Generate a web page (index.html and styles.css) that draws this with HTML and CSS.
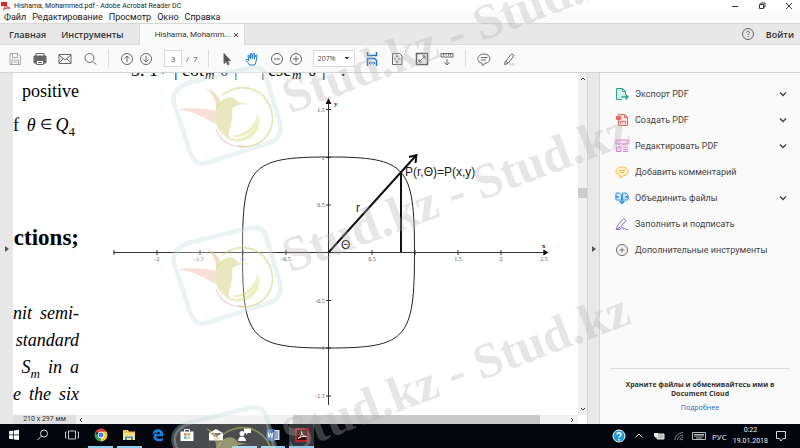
FILE: index.html
```html
<!DOCTYPE html>
<html lang="ru">
<head>
<meta charset="utf-8">
<title>Hishama, Mohammed.pdf - Adobe Acrobat Reader DC</title>
<link rel="stylesheet" href="styles.css">
</head>
<body>
<header class="titlebar">
  <svg class="app-icon" viewBox="0 0 10 10"><path d="M1 0h6l2 2v8H1z" fill="#fff" stroke="#ddd" stroke-width=".5"/><path d="M0 1h6v4H0z" fill="#d8272c"/><path d="M2 9c2-2 2.500-4 2-6 1 3 3 4 5 4-3 0-5 0-7 2z" fill="none" stroke="#d8272c"/></svg>
  <span class="title">Hishama, Mohammed.pdf - Adobe Acrobat Reader DC</span>
  <div class="win-controls">
    <button aria-label="Свернуть"><svg viewBox="0 0 8 8"><path d="M1 4.500h6"/></svg></button>
    <button aria-label="Восстановить"><svg viewBox="0 0 8 8"><path d="M1.500 2.500h4v4h-4zM3 2.500V1h4v4H5.500"/></svg></button>
    <button aria-label="Закрыть"><svg viewBox="0 0 8 8"><path d="M1 1l6 6M7 1L1 7"/></svg></button>
  </div>
</header>
<nav class="menubar">
  <button>Файл</button><button>Редактирование</button><button>Просмотр</button><button>Окно</button><button>Справка</button>
</nav>
<div class="tabs">
  <button class="home">Главная</button>
  <button class="tools-tab">Инструменты</button>
  <div class="doc-tab"><span>Hishama, Mohamm...</span><button aria-label="Закрыть вкладку"><svg viewBox="0 0 6 6"><path d="M1 1l4 4M5 1L1 5"/></svg></button></div>
  <div class="account">
    <button class="icon" aria-label="Справка"><svg viewBox="0 0 14 14"><circle cx="7" cy="7" r="5.500"/><path d="M5.500 5.700c0-2 3-2 3 0 0 1-1.500 1-1.500 2.300M7 9v1"/></svg></button>
    <button class="login">Войти</button>
  </div>
</div>
<div class="toolbar">
  <div class="group wide">
    <button class="icon pale" aria-label="Сохранить"><svg viewBox="0 0 16 16"><path d="M3 2.500h8l2.500 2.500v8.500H3zM5.500 2.500v4h5v-4M5 13.500V9h6.500v4.500M6.500 11h3.500"/></svg></button>
    <button class="icon" aria-label="Печать"><svg viewBox="0 0 16 16"><path d="M4 5V2.500h8V5"/><path d="M2 5h12v7H2z" fill="#666"/><path d="M4.500 9.500h7v4h-7z" fill="#fff"/><path d="M6 11.500h4"/></svg></button>
    <button class="icon" aria-label="Почта"><svg viewBox="0 0 16 16"><path d="M2 3.500h12v9H2zM2 4l6 5 6-5M2 12l4.500-4.500M14 12L9.500 7.500"/></svg></button>
    <button class="icon" aria-label="Найти"><svg viewBox="0 0 16 16"><circle cx="7.500" cy="7" r="4.500"/><path d="M11 10.500l3 3"/></svg></button>
  </div>
  <i class="sep"></i>
  <div class="group">
    <button class="icon" aria-label="Предыдущая страница"><svg viewBox="0 0 16 16"><circle cx="8" cy="8" r="5.500"/><path d="M8 11V5M5.500 7.500L8 5l2.500 2.500"/></svg></button>
    <button class="icon" aria-label="Следующая страница"><svg viewBox="0 0 16 16"><circle cx="8" cy="8" r="5.500"/><path d="M8 5v6M5.500 8.500L8 11l2.500-2.500"/></svg></button>
  </div>
  <div class="pager"><input aria-label="Страница" value="3"><span>/&nbsp; 7</span></div>
  <i class="sep"></i>
  <div class="group wide">
    <button class="icon" aria-label="Выделение"><svg viewBox="0 0 16 16"><path d="M5 2.500v10l2.300-2 1.500 3.300 1.300-.6-1.500-3.200 3-.3z" fill="#555"/></svg></button>
    <button class="icon blue" aria-label="Рука"><svg viewBox="0 0 16 16"><path d="M5.500 14C4.500 12 3 10.500 2 9.500c-.5-1 .7-1.600 1.500-1L5 9.700 4 5c-.2-1 1-1.300 1.400-.4L6.500 8 6.300 3c0-1 1.400-1 1.500 0L8.300 7.500 9 2.800c.2-1 1.500-.8 1.400.2L10.200 8l1.500-3.700c.4-.9 1.500-.4 1.300.5L12.200 9.500c-.2 2-.7 3-1.700 4.500z" fill="#fff"/></svg></button>
    <div class="group">
    <button class="icon" aria-label="Уменьшить"><svg viewBox="0 0 16 16"><circle cx="8" cy="8" r="5.500"/><path d="M5 8h6"/></svg></button>
    <button class="icon" aria-label="Увеличить"><svg viewBox="0 0 16 16"><circle cx="8" cy="8" r="5.500"/><path d="M5 8h6M8 5v6"/></svg></button>
    </div>
  </div>
  <select class="zoom" aria-label="Масштаб"><option>207%</option></select>
  <div class="group wide">
    <button class="icon blue" aria-label="По ширине"><svg viewBox="0 0 16 16"><path d="M3.500 1v3.500h9V1M3.500 15V7.500h7l2 2V15" stroke-width="1.500"/><path d="M5 12h6M6.500 10.500L5 12l1.500 1.500M9.500 10.500L11 12l-1.500 1.500" /></svg></button>
    <button class="icon" aria-label="По странице"><svg viewBox="0 0 16 16"><path d="M3.500 2.500h7l2.500 2.500v8.500H3.500zM8 4.500v2M8 9.500v2M5 8h2M9 8h2.500M7 5.500l1-1 1 1M7 10.500l1 1 1-1"/></svg></button>
    <button class="icon" aria-label="Во весь экран"><svg viewBox="0 0 16 16"><path d="M2.500 2.500h11v11h-11z" stroke-width="1.500"/><path d="M5 11l6-6M8 5h3v3M5 8v3h3" /></svg></button>
    <button class="icon" aria-label="Режим чтения"><svg viewBox="0 0 16 16"><path d="M2 2.500h12v3.500H2zM4.500 3v1.500M7 3v1.500M9.500 3v1.500M11.500 3v1.500M8 8v6M5.500 11.500L8 14l2.500-2.500"/></svg></button>
  </div>
  <i class="sep"></i>
  <div class="group wide">
    <button class="icon" aria-label="Комментарий"><svg viewBox="0 0 16 16"><path d="M6 12.300C-.5 11 1 3 8 3s8.500 8 1 9.500L6.500 14.500zM5 6.500h6.500M5 9h5"/></svg></button>
    <button class="icon" aria-label="Маркер"><svg viewBox="0 0 16 16"><path d="M8 13.500h6" stroke="#ddd" stroke-width="2"/><path d="M4 11l6.500-8 2.500 1.500-6 8-3.500 1zM4.500 10l2.500 2"/></svg></button>
  </div>
</div>
<main class="workspace">
  <button class="rail left" aria-label="Показать панель навигации"><svg viewBox="0 0 4 6"><path d="M0 0l4 3-4 3z"/></svg></button>
  <section class="viewer">
    <div class="page-row">
      <article class="page">
        <div class="text">
          <p class="line">positive</p>
          <p class="line formula"><span class="f">f</span><i>θ</i><span class="in">∈</span><span><i>Q</i><sub>4</sub></span></p>
          <h2 class="line">ctions;</h2>
          <p class="line it"><span>nit</span><span>semi-</span></p>
          <p class="line it">standard</p>
          <p class="line it"><span>S<sub>m</sub></span><span>in</span><span>a</span></p>
          <p class="line it"><span>e</span><span>the</span><span>six</span></p>
        </div>
        <svg class="chart" viewBox="83 73 495 342" preserveAspectRatio="xMinYMin meet">
          <g class="cut"><text x="131" y="76">3. 1+</text><text x="174" y="76">|</text><text x="182" y="76">cot</text><text x="220" y="76">θ</text><text x="234" y="76">|</text><text x="261" y="76">|</text><text x="268" y="76">csc</text><text x="308" y="76">θ</text><text x="322" y="76">|</text><text x="341" y="76">.</text></g>
          <g class="sub"><text x="205" y="79">m</text><text x="292" y="79">m</text></g>
          <g class="axes">
            <path d="M113 252.500h434M328.500 102v303"/>
            <path d="M114 250v5M157 250v5M200 250v5M243 250v5M286 250v5M372 250v5M415 250v5M458 250v5M501 250v5M544 250v5M326 109.500h5M326 157.500h5M326 205h5M326 300.500h5M326 348h5M326 396h5"/>
            <path class="solid" d="M548.500 252.500l-5-3v6zM328.500 98l-3 6h6z"/>
            <path class="curve" d="M414.500 252.500C414.500 166 407 157 328.500 157S242.500 166 242.500 252.500 250 348 328.500 348 414.500 339 414.500 252.500z"/>
            <path class="bold" d="M328.500 252.500L416.500 155M409 157l7.500-2-1 8M401 172v80"/>
          </g>
          <g class="ticks">
            <text x="157" y="261">-2</text><text x="199" y="261">-1.5</text><text x="242" y="261">-1</text><text x="286" y="261">-0.5</text><text x="372" y="261">0.5</text><text x="458" y="261">1.5</text><text x="501" y="261">2</text><text x="544" y="261">2.5</text>
            <text x="321" y="112">1.5</text><text x="323" y="160">1</text><text x="321" y="207">0.5</text><text x="320" y="303">-0.5</text><text x="322" y="350">-1</text><text x="320" y="398">-1.5</text>
          </g>
          <g class="names"><text x="334" y="106">y</text><text x="542" y="248">x</text></g>
          <g class="labels"><text x="405" y="176">P(r,Θ)=P(x,y)</text><text x="356" y="212">r</text><text x="341" y="249">Θ</text></g>
        </svg>
      </article>
      <div class="vscroll">
        <svg viewBox="0 0 6 4"><path d="M1 3l2-2 2 2"/></svg><i class="thumb"></i><svg viewBox="0 0 6 4"><path d="M1 1l2 2 2-2"/></svg>
      </div>
    </div>
    <div class="hscroll">
      <span class="size">210 x 297 мм</span>
      <svg viewBox="0 0 4 6"><path d="M3 1L1 3l2 2"/></svg>
      <i class="thumb"></i>
      <svg viewBox="0 0 4 6"><path d="M1 1l2 2-2 2"/></svg>
      <i class="corner"></i>
    </div>
  </section>
  <button class="rail right" aria-label="Скрыть панель инструментов"><svg viewBox="0 0 4 6"><path d="M0 0l4 3-4 3z"/></svg></button>
  <aside class="panel">
    <ul>
      <li><button><svg class="ti" viewBox="0 0 14 14" stroke="#2aa58b"><path d="M7 12.500H1.500v-11h6l3 3V7M7.500 1.500v3h3" fill="#d5efe9"/><path d="M6.500 10h6.500M10.500 7.500L13 10l-2.500 2.500" stroke-width="1.500"/></svg><span>Экспорт PDF</span><svg class="chev" viewBox="0 0 8 6"><path d="M1 1.500l3 3 3-3"/></svg></button></li>
      <li><button><svg class="ti" viewBox="0 0 14 14" stroke="#e8685f"><path d="M3.500 1.500h6l3 3v8h-9zM9.500 1.500v3h3" fill="#fbe0dd"/><path d="M1.500 3.500h4v3h-4z" fill="#e8685f"/><path d="M5.500 11V8.500h5V11"/></svg><span>Создать PDF</span><svg class="chev" viewBox="0 0 8 6"><path d="M1 1.500l3 3 3-3"/></svg></button></li>
      <li><button><svg class="ti" viewBox="0 0 14 14" stroke="#e07fd0"><path d="M1 1h12v4H1zM1.500 8h4.500v4.500H1.500z" fill="#f9def4"/><path d="M8 8h5M8 10.300h5M8 12.500h5"/></svg><span>Редактировать PDF</span><svg class="chev" viewBox="0 0 8 6"><path d="M1 1.500l3 3 3-3"/></svg></button></li>
      <li><button><svg class="ti" viewBox="0 0 14 14" stroke="#f8bd4a"><path d="M5 10.500C-1 9-.5 2 7 2s8.500 7.500 1 9L5 13z" fill="#fff0cd"/><path d="M4 5.500h6M4 7.500h5"/></svg><span>Добавить комментарий</span></button></li>
      <li><button><svg class="ti" viewBox="0 0 14 14" stroke="#3993dc"><path d="M1 2h3.500l2 2v5H1zM7.500 2H11l2 2v5H7.500z" fill="#cfe6fa"/><path d="M0 6h4M14 6h-4M7 6v6.500M4.500 10L7 12.500 9.500 10" stroke-width="1.500"/></svg><span>Объединить файлы</span><svg class="chev" viewBox="0 0 8 6"><path d="M1 1.500l3 3 3-3"/></svg></button></li>
      <li><button><svg class="ti" viewBox="0 0 14 14" stroke="#8173e6"><path d="M1 12.500l2-4.500 5.500-6.500 2.500 2-5.500 6.500-4.500 2.500zM1 12.500h4c2-1 2.500-4 3-2s0 2 1.500 1 .5 1 2 1h1.500"/></svg><span>Заполнить и подписать</span></button></li>
      <li><button><svg class="ti" viewBox="0 0 14 14" stroke="#666"><circle cx="7" cy="7" r="5.500"/><path d="M4.500 7h5M7 4.500v5"/></svg><span>Дополнительные инструменты</span></button></li>
    </ul>
    <footer><p>Храните файлы и обменивайтесь ими в Document Cloud</p><a href="#">Подробнее</a></footer>
  </aside>
</main>
<footer class="taskbar">
  <div class="apps">
    <button aria-label="Пуск"><svg viewBox="0 0 16 16" fill="#fff"><path d="M3 4.200l4.300-.6v4H3zM8 3.500l5-.7v4.800H8zM3 8.300h4.300v4L3 11.700zM8 8.300h5v4.800l-5-.7z"/></svg></button>
    <button aria-label="Поиск"><svg viewBox="0 0 16 16" fill="none" stroke="#ddd"><circle cx="9" cy="6.500" r="3.500"/><path d="M6.500 9l-4 4"/></svg></button>
    <button aria-label="Представление задач"><svg viewBox="0 0 16 16" fill="none" stroke="#ccc"><path d="M4.500 4h7v8h-7zM2.500 5h-1v6h1M13.500 5h1v6h-1"/></svg></button>
    <button class="open" aria-label="Chrome"><svg viewBox="0 0 16 16"><path d="M8 8L2.400 4.800A6.500 6.500 0 0 1 13.600 4.800z" fill="#e1453a"/><path d="M8 8V4.800h5.600A6.500 6.500 0 0 1 8 14.500z" fill="#f7ca33"/><path d="M8 8v6.500A6.500 6.500 0 0 1 2.400 4.800L5 9.500z" fill="#3c9f50"/><circle cx="8" cy="8" r="3" fill="#3f7fe0" stroke="#fff"/></svg></button>
    <button class="open" aria-label="Проводник"><svg viewBox="0 0 16 16"><path d="M2 3h5l1 1.500h6V13H2z" fill="#f0c451"/><path d="M2 6h12v7H2z" fill="#fbe08c"/><path d="M4 13V9.500h8V13h-2v-2H6v2z" fill="#4195cb"/></svg></button>
    <button aria-label="Edge"><svg viewBox="0 0 16 16"><path d="M2.500 7.500C3 0 13.500 1 13.500 8v1.200H6c.4 3 4 3.400 6.800 1.600v2.600C8 15.500 3.400 13.500 3.500 9.500c0-2 1.500-3.500 3.200-4.300-1.800.1-3.400 1-4.200 2.300zM6.200 7.300h4c0-3-3.700-2.800-4 0z" fill="#1684dc"/></svg></button>
    <button aria-label="Магазин"><svg viewBox="0 0 16 16"><path d="M5.500 5V2.500h5V5" fill="none" stroke="#fff"/><path d="M1.500 4.500h13v9.500h-13z" fill="#fff"/><path d="M5 6h2.700v2.700H5z" fill="#e8562d"/><path d="M8.300 6H11v2.700H8.300z" fill="#78b536"/><path d="M5 9.300h2.700V12H5z" fill="#32a5df"/><path d="M8.300 9.300H11V12H8.300z" fill="#f3b82b"/></svg></button>
    <button aria-label="Почта"><svg viewBox="0 0 16 16"><path d="M1 6l7-4 7 4v7.500H1z" fill="#fff"/><path d="M2 6h12l-5 3.500 1 2z" fill="#444a30"/></svg></button>
    <button class="open" aria-label="Люди"><svg viewBox="0 0 16 16" fill="#fff"><circle cx="6" cy="6.500" r="2.500"/><path d="M2 14c0-6 8-6 8 0zM8 1.500h7v4.500h-3L10 8V6H8z"/></svg></button>
    <button class="open" aria-label="Word"><svg viewBox="0 0 16 16"><path d="M7 3h7.500v10H7z" fill="#dce7f7"/><path d="M10 5h3M10 7h3M10 9h3M10 11h3" stroke="#3866ad"/><path d="M1.500 2.800L9.500 1.500v13L1.500 13.200z" fill="#2b579a"/><path d="M3 5.500l1 5 1.500-4.500L7 10.500l1-5" fill="none" stroke="#fff"/></svg></button>
    <button class="open active" aria-label="Acrobat"><svg viewBox="0 0 16 16"><path d="M2 2h12v12H2z" fill="#3a0c0c" stroke="#d8272c" stroke-width="1.500"/><path d="M4 11.500C7 9.500 8 7 7.500 4.500 8 8 10 9.500 12.500 9.500 9 9 6 10 4 11.500z" fill="none" stroke="#eee"/></svg></button>
  </div>
  <div class="tray">
    <svg viewBox="0 0 14 14"><circle cx="7" cy="7" r="6" fill="#1f9ad8" stroke="#fff"/><path d="M5 5.500C5 3 9 3 9 5.500 9 7 7 7 7 8.500M7 10v1.300" fill="none" stroke="#fff" stroke-width="1.500"/></svg>
    <svg viewBox="0 0 14 14" fill="none" stroke="#ddd"><path d="M3.500 8.500L7 5l3.500 3.500"/></svg>
    <svg viewBox="0 0 14 14"><path d="M5 5h7v5H5z" fill="#bbb" stroke="#eee"/><path d="M2 4h4v3l-2 2-2-2z" fill="#eee"/></svg>
    <svg viewBox="0 0 14 14" fill="none" stroke="#888"><path d="M3 11C3 7 6 4 11 3.500M5.500 11c0-2.500 2-4.500 5.500-5M8 11c0-1.500 1-2.500 3-3"/><circle cx="10" cy="10.500" r=".5"/></svg>
    <svg viewBox="0 0 14 14" fill="none" stroke="#bbb"><path d="M.5 3.500h13v7H.5zM2 5.500h10M2 7h10M4 9h6" /></svg>
    <span class="lang">РУС</span>
    <span class="clock">0:22<br>19.01.2018</span>
    <svg viewBox="0 0 14 14" fill="none" stroke="#ddd"><path d="M2.500 2.500h9v7H9L7 12 5.500 9.500h-3z"/></svg>
  </div>
</footer>
<svg class="watermark" viewBox="0 0 800 448" aria-hidden="true">
  <defs>
    <g id="bird" transform="translate(170 70) scale(.333)">
      <path d="M62 37L240-6Q278-14 288 18L330 160Q338 202 300 218L115 278Q78 290 62 252L12 100Q2 56 62 37z" fill="#fff" fill-opacity=".28" stroke="#bfd8da" stroke-opacity=".33" stroke-width="14"/>
      <path d="M158 75C195 45 245 45 280 78 312 112 317 160 292 196 270 226 235 235 205 229" fill="none" stroke="#c8d060" stroke-opacity=".5" stroke-width="5"/>
      <path d="M24 117C65 112 105 116 137 122L138 160C112 154 98 132 24 117z" fill="#ecb6a0" fill-opacity=".42"/>
      <path d="M106 53C134 63 150 82 153 99L137 122C141 100 136 78 106 53z" fill="#dcc888" fill-opacity=".5"/>
      <path d="M137 122C145 98 160 83 180 82 194 82 200 92 203 97L248 104C225 102 210 102 200 108 182 109 188 126 187 142 186 166 172 182 178 207 155 195 137 172 138 155z" fill="#d6d68a" fill-opacity=".55"/>
      <path d="M178 203C216 216 256 192 266 135 276 190 238 226 178 210zM190 196C225 196 252 170 266 130 260 178 232 204 190 202z" fill="#d0d860" fill-opacity=".4"/>
      <path d="M138 178C153 217 180 232 222 229" fill="none" stroke="#eda6ae" stroke-opacity=".5" stroke-width="4"/>
    </g>
  </defs>
  <use href="#bird"/><use href="#bird" y="160"/><use href="#bird" y="340"/>
  <g class="mark">
    <text transform="translate(290 114) rotate(-20.800)">Stud.kz - Stud.kz</text>
    <text transform="translate(290 273) rotate(-20.800)">Stud.kz - Stud.kz</text>
    <text transform="translate(290 453) rotate(-20.800)">Stud.kz - Stud.kz</text>
  </g>
</svg>
</body>
</html>
```
FILE: styles.css
```css
* { box-sizing: border-box; }
body {
  margin: 0;
  position: relative;
  min-height: 100vh;
  display: flex;
  flex-direction: column;
  overflow: hidden;
  background: #fff;
  color: #333;
  font: 8px/11px "Open Sans", "Noto Sans", sans-serif;
}
button { margin: 0; padding: 0; border: 0; background: none; color: inherit; font: inherit; white-space: nowrap; }
svg { display: block; flex: none; }

.titlebar { display: flex; align-items: center; height: 12px; padding-left: 1px; font-family: Roboto, sans-serif; font-size: 7px; color: #222; }
.app-icon { width: 10px; height: 10px; margin-right: 3px; }
.win-controls { display: flex; gap: 19px; margin-left: auto; padding-right: 7px; }
.win-controls svg { width: 8px; height: 8px; fill: none; stroke: #333; }

.menubar { display: flex; gap: 6px; height: 11px; padding-left: 4px; background: #fafafa; color: #222; font-family: Roboto, sans-serif; font-size: 9px; }

.tabs { display: flex; align-items: stretch; height: 22px; border-top: 1px solid #d8d8d8; border-bottom: 1px solid #dcdcdc; background: #e8e8e8; }
.home, .tools-tab, .login { font-size: 9px; font-weight: 600; }
.home { margin-left: 9px; }
.tools-tab { margin: 0 15px; }
.doc-tab { display: flex; align-items: center; justify-content: space-between; width: 106px; margin-bottom: -1px; padding: 0 5px 0 15px; border: solid #dcdcdc; border-width: 0 1px; background: #fafafa; font-family: Roboto, sans-serif; white-space: nowrap; }
.doc-tab svg { width: 6px; height: 6px; fill: none; stroke: #444; }
.account { display: flex; align-items: center; gap: 11px; margin-left: auto; padding-right: 6px; }
.account .icon svg { width: 14px; height: 14px; }

.toolbar { display: flex; align-items: center; height: 28px; padding-left: 7px; border-bottom: 1px solid #d4d4d4; background: #fafafa; }
.group { display: flex; gap: 3px; }
.wide { gap: 9px; }
.icon svg { width: 16px; height: 16px; fill: none; stroke: #666; }
.icon.blue svg { stroke: #1b74c5; }
.pale { opacity: .55; }
.sep { width: 1px; height: 17px; margin: 0 10px; background: #ddd; }
.pager { display: flex; align-items: center; gap: 4px; margin-left: 10px; color: #555; }
.pager input { width: 18px; height: 17px; padding: 0; border: 1px solid #d8d8d8; background: #fff; color: #444; font: inherit; text-align: center; }
.zoom { width: 42px; height: 17px; margin: 0 9px; padding: 0 4px; appearance: none; border: 1px solid #d8d8d8; border-radius: 0; color: #444; font: inherit; font-size: 7px;
  background: linear-gradient(#444, #444) right 5px top 6px / 4px 1px no-repeat, linear-gradient(#444, #444) right 6px top 7px / 2px 1px no-repeat, #fff; }

.workspace { flex: 1; display: flex; min-height: 0; }
.rail { display: flex; align-items: center; justify-content: center; width: 13px; background: #e8e8e8; }
.rail svg { width: 4px; height: 6px; fill: #555; }
.rail.right { border: solid #d6d6d6; border-width: 0 1px; }
.viewer { flex: 1; min-width: 0; display: flex; flex-direction: column; }
.page-row { flex: 1; display: flex; min-height: 0; }
.page { flex: 1; display: flex; min-width: 0; overflow: hidden; color: #000; font-family: "Liberation Serif", serif; }
.text { width: 66px; margin-right: 4px; padding-top: 7px; font-size: 18px; line-height: 22px; }
.line { display: flex; justify-content: flex-end; gap: 8px; margin: 0; height: 22px; white-space: nowrap; }
.line sub { font-size: 13px; line-height: 0; }
.formula { gap: 4px; margin-top: 12px; padding-right: 4px; }
.formula .f { margin-right: auto; }
.formula .in { font-size: 14px; }
h2.line { margin: 88px 0 54px; font-size: 23px; line-height: 28px; height: 24px; }
.it { height: 27px; font-style: italic; }
.chart { flex: 1; min-width: 0; }
.cut { font: 18px "Liberation Serif", serif; }
.sub { font: italic 13px "Liberation Serif", serif; }
.axes path { fill: none; stroke: #333; stroke-width: 1; }
.axes .curve { stroke: #222; }
.axes .solid { fill: #111; stroke: none; }
.axes .bold { stroke: #111; stroke-width: 2; }
.ticks { font: 6px "Liberation Serif", serif; fill: #555; text-anchor: middle; }
.names { font: bold 7px "Liberation Serif", serif; fill: #222; }
.labels { font: 12px "Liberation Sans", sans-serif; fill: #222; }

.vscroll { display: flex; flex-direction: column; align-items: center; width: 9px; padding: 4px 0; background: #f0f0f0; }
.vscroll svg { width: 6px; height: 4px; }
.vscroll svg, .hscroll svg { fill: none; stroke: #333; }
.vscroll .thumb { width: 9px; height: 10px; margin: 107px 0 auto; background: #cdcdcd; }
.hscroll { display: flex; align-items: center; height: 9px; background: #f0f0f0; }
.size { width: 63px; height: 9px; margin-right: 3px; background: #e0e0e0; font-family: Roboto, sans-serif; font-size: 7px; line-height: 9px; text-align: center; }
.hscroll svg { width: 4px; height: 6px; }
.hscroll .thumb { flex: 1; height: 9px; margin: 0 30px 0 210px; background: #c9c9c9; }
.corner { width: 9px; height: 9px; margin-left: 4px; background: #fff; }

.panel { display: flex; flex-direction: column; justify-content: space-between; width: 200px; background: #fafafa; }
.panel ul { margin: 0; padding: 8px 13px 0 15px; list-style: none; font-family: Roboto, sans-serif; font-size: 9px; }
.panel li button { display: flex; align-items: center; gap: 6px; width: 100%; height: 26px; color: #444; }
.ti { width: 14px; height: 14px; fill: none; }
.chev { width: 8px; height: 6px; margin-left: auto; fill: none; stroke: #444; stroke-width: 1.5; }
.panel footer { height: 56px; margin: 0 10px; padding: 11px 8px 0; border-top: 1px solid #ddd; font-size: 7px; line-height: 9px; text-align: center; }
.panel p { margin: 0 0 5px; font-weight: 700; }
.panel a { color: #2a62b8; text-decoration: none; }

.taskbar { display: flex; justify-content: space-between; height: 24px; background: #03060c; color: #eee; }
.apps { display: flex; width: 316px; }
.apps button { flex: 1; display: flex; justify-content: center; align-items: center; margin: 0 2px; border-bottom: 2px solid transparent; }
.apps svg { width: 16px; height: 16px; }
.apps .open { border-color: #8ccdf2; }
.apps .active { background: #33363b; }
.tray { display: flex; align-items: center; gap: 6px; padding-right: 12px; }
.tray svg { width: 14px; height: 14px; }
.clock { font-family: Roboto, sans-serif; font-size: 7px; line-height: 11px; text-align: center; }

.watermark { position: absolute; inset: 0; width: 100%; height: auto; pointer-events: none; }
.mark { font: bold 50px "Liberation Serif", serif; fill: #b4aeb0; fill-opacity: .32; }
```
